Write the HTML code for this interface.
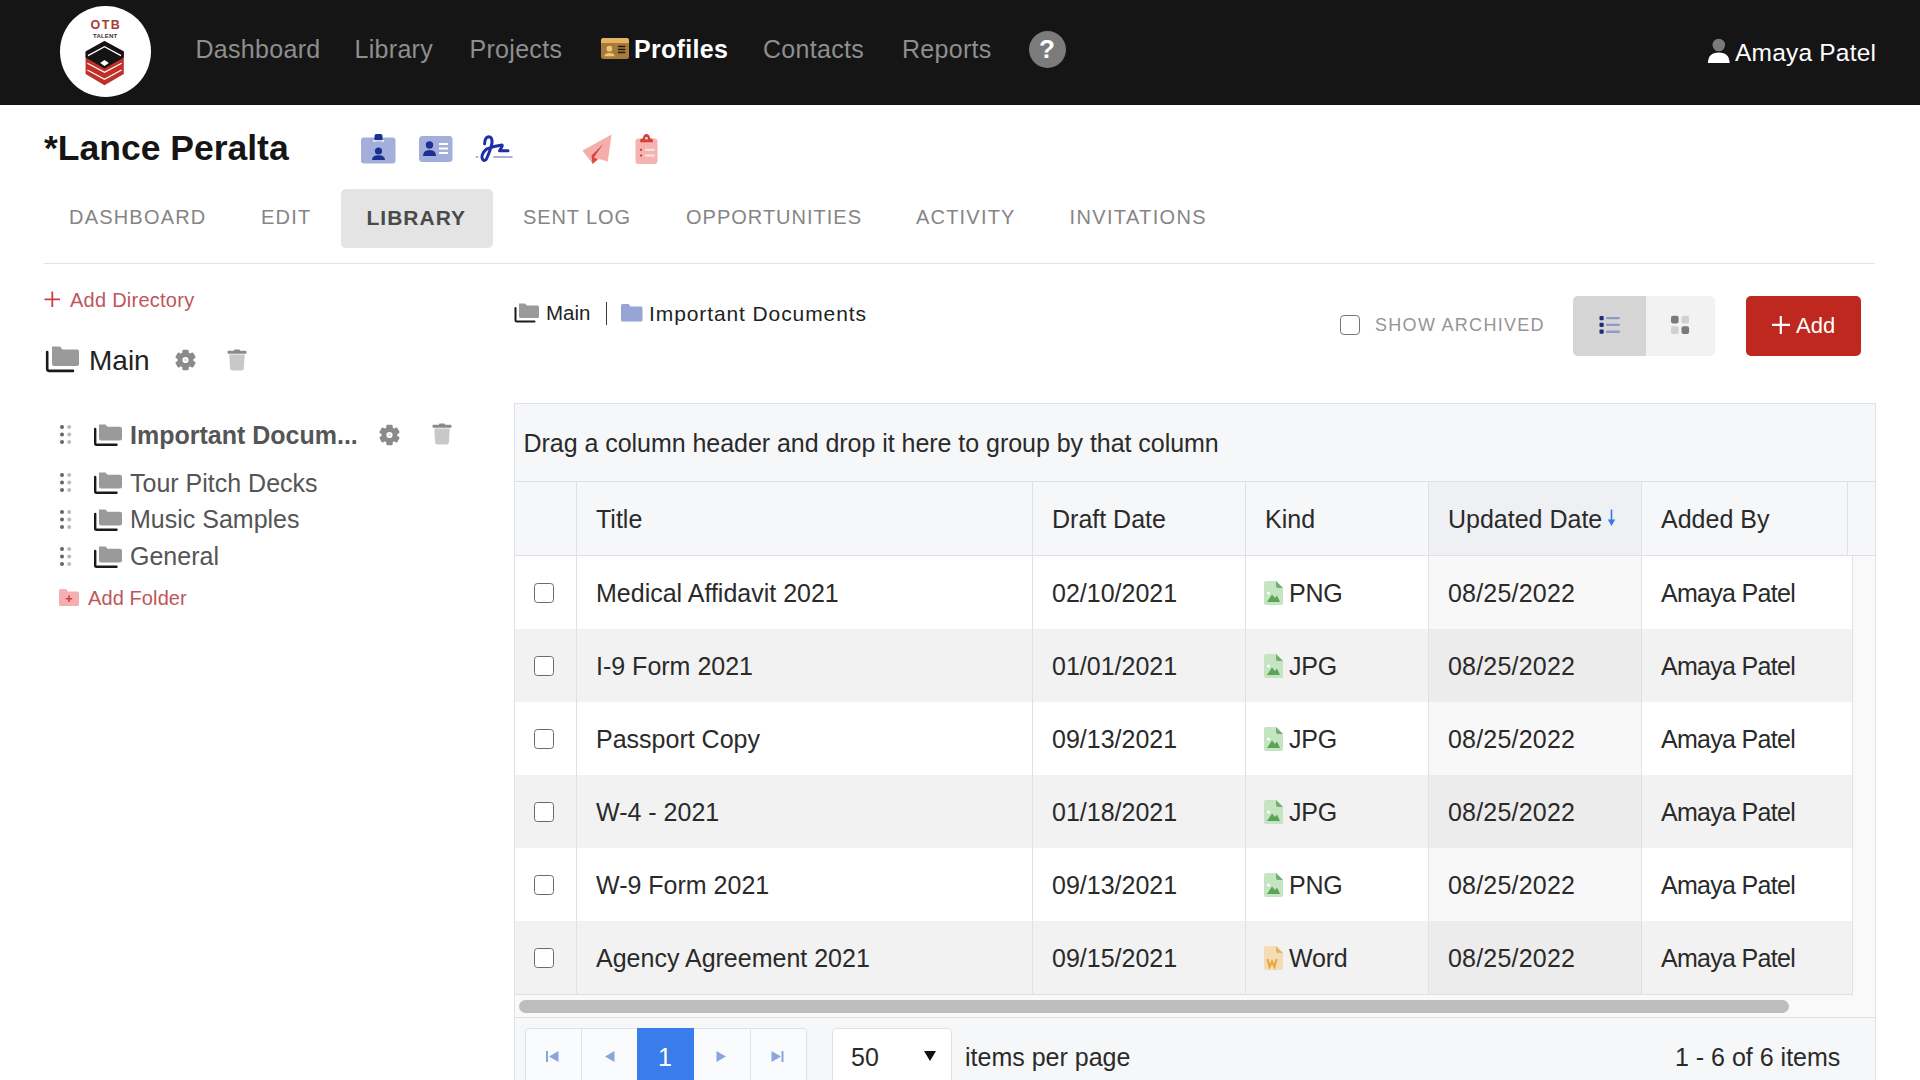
<!DOCTYPE html>
<html><head><meta charset="utf-8">
<style>
*{box-sizing:border-box;margin:0;padding:0}
html,body{width:1920px;height:1080px;overflow:hidden;background:#fff;font-family:"Liberation Sans",sans-serif;color:#222}
.a{position:absolute;white-space:nowrap;line-height:1}
svg{position:absolute;overflow:visible}
#top{position:absolute;left:0;top:0;width:1920px;height:105px;background:#151515}
.nav{color:#8e8e8e;font-size:25px;letter-spacing:0.3px}
.tab{color:#858585;font-size:20px;letter-spacing:1.2px}
.side{color:#555;font-size:25px}
.g{font-size:25px;color:#2a2a2a}
.hdr{position:absolute;background:#f6f7f9}
.vl{position:absolute;width:1px;background:#dfe1e5}
.hl{position:absolute;height:1px;background:#dfe1e5}
.row{position:absolute;left:515px;width:1337px;height:73px}
.cb{position:absolute;left:534px;width:19.5px;height:19.5px;border:1.8px solid #6a6a6a;border-radius:3.5px;background:#fff}

</style></head><body>
<!-- TOP BAR -->
<div id="top"></div>
<div style="position:absolute;left:59.8px;top:5.8px;width:91px;height:91px;border-radius:50%;background:#fff"></div>
<div class="a" style="left:90.5px;top:19px;font-size:12.5px;font-weight:700;letter-spacing:1.5px;color:#a83a38">OTB</div>
<div class="a" style="left:93px;top:33px;font-size:6px;font-weight:700;letter-spacing:0.2px;color:#333">TALENT</div>
<svg style="left:85px;top:41px" width="39" height="45" viewBox="0 0 39 45">
 <polygon points="19.5,0 38.8,10.6 38.8,33 19.5,44.2 0.6,33 0.6,10.6" fill="#c0302a"/>
 <polygon points="19.5,0 38.8,10.6 38.8,16.5 19.5,27.5 0.6,16.5 0.6,10.6" fill="#141414"/>
 <path d="M3 14.6L19.5 5.6L36 14.6" fill="none" stroke="#fff" stroke-width="1.2"/>
 <path d="M15.2 22.1L19.5 19.1L23.8 22.1L19.5 25.1Z" fill="#fff"/>
 <path d="M2.4 22.2L19.5 31.4L36.6 22.2" fill="none" stroke="#fff" stroke-width="1.2"/>
 <path d="M2.4 29L19.5 38.2L36.6 29" fill="none" stroke="#fff" stroke-width="1.2"/>
</svg>
<div class="a nav" style="left:195.5px;top:37px">Dashboard</div>
<div class="a nav" style="left:354.5px;top:37px">Library</div>
<div class="a nav" style="left:469.5px;top:37px">Projects</div>
<svg style="left:601px;top:38px" width="28" height="21" viewBox="0 0 28 21">
 <rect x="0" y="0" width="28" height="21" rx="2.5" fill="#a57c3e"/>
 <path d="M0 5V2.5Q0 0 2.5 0H25.5Q28 0 28 2.5V5Z" fill="#e9b263"/>
 <circle cx="8.4" cy="10.7" r="2.9" fill="#f2c66f"/>
 <path d="M3.3 18.2Q3.8 15 8.5 15Q13.2 15 13.7 18.2Z" fill="#f2c66f"/>
 <rect x="16.9" y="7.7" width="7.4" height="1.5" fill="#2a1a08"/>
 <rect x="16.9" y="10.7" width="7.4" height="1.5" fill="#2a1a08"/>
 <rect x="16.9" y="13.7" width="7.4" height="1.5" fill="#2a1a08"/>
</svg>
<div class="a" style="left:634px;top:37px;font-size:25px;letter-spacing:0.3px;font-weight:700;color:#fff">Profiles</div>
<div class="a nav" style="left:763px;top:37px">Contacts</div>
<div class="a nav" style="left:902px;top:37px">Reports</div>
<div style="position:absolute;left:1029px;top:31px;width:37px;height:37px;border-radius:50%;background:#7b7b7b"></div>
<div class="a" style="left:1036px;top:36px;width:22px;text-align:center;font-size:26px;font-weight:700;color:#fff">?</div>
<svg style="left:1708px;top:38px" width="22" height="26" viewBox="0 0 22 26">
 <circle cx="10.8" cy="7" r="6.3" fill="#7a7a7a"/>
 <path d="M0 25Q0 14.5 10.8 14.5Q21.5 14.5 21.5 25Z" fill="#fff"/>
</svg>
<div class="a" style="left:1735px;top:40.5px;font-size:24.5px;letter-spacing:0.2px;color:#fff">Amaya Patel</div>

<!-- TITLE -->
<div class="a" style="left:44px;top:131px;font-size:35.5px;font-weight:700;color:#151515">*Lance Peralta</div>
<svg style="left:361px;top:134px" width="35" height="30" viewBox="0 0 35 30">
 <rect x="0" y="3.5" width="34.5" height="26" rx="3" fill="#a3aedb"/>
 <rect x="13.5" y="0" width="8" height="7.5" rx="2" fill="#1b3192"/>
 <rect x="12" y="6.2" width="11" height="1.4" fill="#fff"/>
 <circle cx="17.5" cy="17" r="3.6" fill="#1b3192"/>
 <path d="M11 26Q11 21.2 17.5 21.2Q24 21.2 24 26Z" fill="#1b3192"/>
</svg>
<svg style="left:419px;top:136px" width="34" height="27" viewBox="0 0 34 27">
 <rect x="0" y="0" width="33.5" height="26" rx="3.5" fill="#a3aedb"/>
 <circle cx="10.5" cy="9" r="3.7" fill="#1b3192"/>
 <path d="M4 20Q4 14 10.5 14Q17 14 17 20Z" fill="#1b3192"/>
 <rect x="20" y="7" width="9" height="2" fill="#fff"/>
 <rect x="20" y="11.5" width="9" height="2" fill="#fff"/>
 <rect x="20" y="16" width="9" height="2" fill="#fff"/>
</svg>
<svg style="left:475px;top:135px" width="40" height="28" viewBox="0 0 40 28">
 <path d="M9.6 8.8Q10 2 13.5 1.8Q17.5 1.8 17 8Q16 14 11.2 24.5Q8.5 27 7 23Q6.5 18 12 13.8Q19 11 27 10Q28 10.5 24.5 15.8H33" fill="none" stroke="#1b2fa6" stroke-width="3" stroke-linecap="round" stroke-linejoin="round"/>
 <path d="M0.8 22H3.2M18.3 22H37.5" stroke="#8e98c8" stroke-width="1.6"/>
</svg>
<svg style="left:581px;top:133px" width="32" height="32" viewBox="0 0 32 32">
 <path d="M1.5 17.5L30.6 1.4L26.8 28.6L18 26L11.8 31Z" fill="#f4aeab"/>
 <path d="M22.5 10.8L10.5 22.5L11.5 31L16.5 26.3L12.8 24.5Z" fill="#d8453d"/>
</svg>
<svg style="left:634px;top:133px" width="25" height="32" viewBox="0 0 25 32">
 <rect x="1.5" y="5.5" width="22" height="25.5" rx="3" fill="#f4b3b0"/>
 <path d="M6.2 9.3V7.2Q6.2 5.6 8 5.6H8.8Q9.3 0.9 12.5 0.9Q15.7 0.9 16.2 5.6H17Q18.8 5.6 18.8 7.2V9.3Z" fill="#d8403b"/>
 <circle cx="12.5" cy="5.2" r="1.3" fill="#fde3d8"/>
 <circle cx="7" cy="16.8" r="1.1" fill="#c23a35"/>
 <circle cx="7" cy="22.5" r="1.1" fill="#c23a35"/>
 <rect x="11" y="15.8" width="9.5" height="2" fill="#fce4e2"/>
 <rect x="11" y="21.5" width="9.5" height="2" fill="#fce4e2"/>
</svg>

<!-- TABS -->
<div style="position:absolute;left:341px;top:188.5px;width:152px;height:59px;background:#e4e4e4;border-radius:5px"></div>
<div class="a tab" style="left:69px;top:207px">DASHBOARD</div>
<div class="a tab" style="left:261px;top:207px">EDIT</div>
<div class="a tab" style="left:366.5px;top:206.5px;font-size:21px;font-weight:700;letter-spacing:1px;color:#4a4a4a">LIBRARY</div>
<div class="a tab" style="left:523px;top:207px;letter-spacing:0.9px">SENT LOG</div>
<div class="a tab" style="left:686px;top:207px;letter-spacing:1px">OPPORTUNITIES</div>
<div class="a tab" style="left:916px;top:207px">ACTIVITY</div>
<div class="a tab" style="left:1069.5px;top:207px;letter-spacing:1.35px">INVITATIONS</div>
<div style="position:absolute;left:44px;top:262.8px;width:1831px;height:1.6px;background:#e4e4e4"></div>

<!-- SIDEBAR -->
<svg style="left:44px;top:291px" width="17" height="17"><path d="M8.3 0.5V16M0.5 8.3H16" stroke="#c9403f" stroke-width="1.8"/></svg>
<div class="a" style="left:70px;top:290px;font-size:20px;letter-spacing:0.25px;color:#c0555b">Add Directory</div>
<svg style="left:45px;top:346px" width="36" height="27" viewBox="0 0 36 27">
 <path d="M7 0.5H15L17.5 3.5H32Q34 3.5 34 5.5V18Q34 20 32 20H9Q7 20 7 18Z" fill="#9a9a9a"/>
 <path d="M2.2 6V22.8Q2.2 24.9 4.3 24.9H28" fill="none" stroke="#1a1a1a" stroke-width="2.6" stroke-linecap="round"/>
</svg>
<div class="a" style="left:89px;top:347px;font-size:28px;color:#222">Main</div>
<svg style="left:175px;top:349px" width="21" height="22" viewBox="-10.5 -11 21 22"><g fill="#8a8a8a"><circle r="7.9"/><rect x="-3.2" y="-10.3" width="6.4" height="20.6" rx="1.4"/><rect x="-3.2" y="-10.3" width="6.4" height="20.6" rx="1.4" transform="rotate(60)"/><rect x="-3.2" y="-10.3" width="6.4" height="20.6" rx="1.4" transform="rotate(120)"/></g><circle r="3.1" fill="#fff"/><circle r="1.4" fill="#ddd"/></svg>
<svg style="left:227px;top:349px" width="20" height="22" viewBox="0 0 20 22">
 <rect x="7" y="0.6" width="6" height="2.4" rx="1" fill="#8a8a8a"/>
 <rect x="0.5" y="1.8" width="19" height="3" rx="1" fill="#8a8a8a"/>
 <path d="M2.3 5.5H17.7L16.9 19.5Q16.7 21.5 14.7 21.5H5.3Q3.3 21.5 3.1 19.5Z" fill="#c8c8c8"/>
</svg>
<!-- tree rows -->
<svg style="left:59px;top:424px" width="13" height="20"><g fill="#666"><circle cx="3" cy="3" r="2"/><circle cx="3" cy="10.5" r="2"/><circle cx="3" cy="18" r="2"/></g><g fill="#bbb"><circle cx="10.2" cy="3" r="2"/><circle cx="10.2" cy="10.5" r="2"/><circle cx="10.2" cy="18" r="2"/></g></svg>
<svg style="left:93px;top:424px" width="30" height="22" viewBox="0 0 30 22"><path d="M6 0.5H12.5L14.5 2.8H27Q29 2.8 29 4.8V14.5Q29 16.5 27 16.5H8Q6 16.5 6 14.5Z" fill="#9a9a9a"/><path d="M2.2 5V19.5Q2.2 20.8 3.5 20.8H23.5" fill="none" stroke="#1a1a1a" stroke-width="2.4" stroke-linecap="round"/></svg>
<svg style="left:379px;top:424px" width="21" height="22" viewBox="-10.5 -11 21 22"><g fill="#8a8a8a"><circle r="7.9"/><rect x="-3.2" y="-10.3" width="6.4" height="20.6" rx="1.4"/><rect x="-3.2" y="-10.3" width="6.4" height="20.6" rx="1.4" transform="rotate(60)"/><rect x="-3.2" y="-10.3" width="6.4" height="20.6" rx="1.4" transform="rotate(120)"/></g><circle r="3.1" fill="#fff"/><circle r="1.4" fill="#ddd"/></svg>
<svg style="left:432px;top:423px" width="20" height="22" viewBox="0 0 20 22"><rect x="7" y="0.6" width="6" height="2.4" rx="1" fill="#8a8a8a"/><rect x="0.5" y="1.8" width="19" height="3" rx="1" fill="#8a8a8a"/><path d="M2.3 5.5H17.7L16.9 19.5Q16.7 21.5 14.7 21.5H5.3Q3.3 21.5 3.1 19.5Z" fill="#c8c8c8"/></svg>
<svg style="left:59px;top:472px" width="13" height="20"><g fill="#666"><circle cx="3" cy="3" r="2"/><circle cx="3" cy="10.5" r="2"/><circle cx="3" cy="18" r="2"/></g><g fill="#bbb"><circle cx="10.2" cy="3" r="2"/><circle cx="10.2" cy="10.5" r="2"/><circle cx="10.2" cy="18" r="2"/></g></svg>
<svg style="left:93px;top:472px" width="30" height="22" viewBox="0 0 30 22"><path d="M6 0.5H12.5L14.5 2.8H27Q29 2.8 29 4.8V14.5Q29 16.5 27 16.5H8Q6 16.5 6 14.5Z" fill="#9a9a9a"/><path d="M2.2 5V19.5Q2.2 20.8 3.5 20.8H23.5" fill="none" stroke="#1a1a1a" stroke-width="2.4" stroke-linecap="round"/></svg>
<svg style="left:59px;top:508.5px" width="13" height="20"><g fill="#666"><circle cx="3" cy="3" r="2"/><circle cx="3" cy="10.5" r="2"/><circle cx="3" cy="18" r="2"/></g><g fill="#bbb"><circle cx="10.2" cy="3" r="2"/><circle cx="10.2" cy="10.5" r="2"/><circle cx="10.2" cy="18" r="2"/></g></svg>
<svg style="left:93px;top:508.5px" width="30" height="22" viewBox="0 0 30 22"><path d="M6 0.5H12.5L14.5 2.8H27Q29 2.8 29 4.8V14.5Q29 16.5 27 16.5H8Q6 16.5 6 14.5Z" fill="#9a9a9a"/><path d="M2.2 5V19.5Q2.2 20.8 3.5 20.8H23.5" fill="none" stroke="#1a1a1a" stroke-width="2.4" stroke-linecap="round"/></svg>
<svg style="left:59px;top:545.5px" width="13" height="20"><g fill="#666"><circle cx="3" cy="3" r="2"/><circle cx="3" cy="10.5" r="2"/><circle cx="3" cy="18" r="2"/></g><g fill="#bbb"><circle cx="10.2" cy="3" r="2"/><circle cx="10.2" cy="10.5" r="2"/><circle cx="10.2" cy="18" r="2"/></g></svg>
<svg style="left:93px;top:545.5px" width="30" height="22" viewBox="0 0 30 22"><path d="M6 0.5H12.5L14.5 2.8H27Q29 2.8 29 4.8V14.5Q29 16.5 27 16.5H8Q6 16.5 6 14.5Z" fill="#9a9a9a"/><path d="M2.2 5V19.5Q2.2 20.8 3.5 20.8H23.5" fill="none" stroke="#1a1a1a" stroke-width="2.4" stroke-linecap="round"/></svg>
<div class="a side" style="left:130px;top:422.5px;font-weight:700">Important Docum...</div>
<div class="a side" style="left:130px;top:471px">Tour Pitch Decks</div>
<div class="a side" style="left:130px;top:507px">Music Samples</div>
<div class="a side" style="left:130px;top:544px">General</div>
<svg style="left:59px;top:589px" width="20" height="17" viewBox="0 0 20 17">
 <path d="M0 1.5Q0 0 1.5 0H7L9 2.5H18.5Q20 2.5 20 4V15.5Q20 17 18.5 17H1.5Q0 17 0 15.5Z" fill="#f4b0b0"/>
 <path d="M10 6.5V13M6.8 9.8H13.2" stroke="#d0403f" stroke-width="1.6"/>
</svg>
<div class="a" style="left:88px;top:588px;font-size:20px;letter-spacing:0.1px;color:#c0555b">Add Folder</div>

<!-- BREADCRUMB / TOOLBAR -->
<svg style="left:514px;top:303px" width="26" height="20" viewBox="0 0 26 20">
 <path d="M5 0.5H11L13 2.5H23.5Q25 2.5 25 4V13.5Q25 15 23.5 15H6.5Q5 15 5 13.5Z" fill="#9a9a9a"/>
 <path d="M1.5 5V17.2Q1.5 18.5 2.8 18.5H20.5" fill="none" stroke="#1a1a1a" stroke-width="2" stroke-linecap="round"/>
</svg>
<div class="a" style="left:546px;top:303px;font-size:20.5px;color:#222">Main</div>
<div style="position:absolute;left:605.8px;top:301.6px;width:1.6px;height:23.4px;background:#3a3a3a"></div>
<svg style="left:621px;top:304px" width="22" height="18" viewBox="0 0 22 18">
 <path d="M0 1.5Q0 0 1.5 0H7.5L9.5 2.5H20Q21.5 2.5 21.5 4V16Q21.5 17.5 20 17.5H1.5Q0 17.5 0 16Z" fill="#98a4d8"/>
</svg>
<div class="a" style="left:649px;top:303px;font-size:21px;letter-spacing:0.9px;color:#222">Important Documents</div>
<div style="position:absolute;left:1340px;top:315px;width:20px;height:20px;border:1.6px solid #777;border-radius:4px"></div>
<div class="a" style="left:1375px;top:315.5px;font-size:18px;letter-spacing:1.3px;color:#959595">SHOW ARCHIVED</div>
<div style="position:absolute;left:1573px;top:296px;width:142px;height:60px;border-radius:5px;background:#f2f2f2;overflow:hidden"><div style="width:73px;height:60px;background:#d5d5d5"></div></div>
<svg style="left:1599px;top:315px" width="23" height="19">
 <rect x="0.5" y="1" width="4.2" height="4.2" rx="1" fill="#1b2f7a"/>
 <rect x="0.5" y="7.8" width="4.2" height="4.2" rx="1" fill="#1b2f7a"/>
 <rect x="0.5" y="14.6" width="4.2" height="4.2" rx="1" fill="#1b2f7a"/>
 <rect x="7" y="2" width="14" height="2.3" rx="1" fill="#8d9cc2"/>
 <rect x="7" y="8.8" width="14" height="2.3" rx="1" fill="#8d9cc2"/>
 <rect x="7" y="15.6" width="14" height="2.3" rx="1" fill="#8d9cc2"/>
</svg>
<svg style="left:1671px;top:315px" width="19" height="20">
 <rect x="0" y="0.8" width="7.6" height="7.6" rx="2" fill="#7a7a7a"/>
 <rect x="10.5" y="0.8" width="7.6" height="7.6" rx="2" fill="#d0d0d0"/>
 <rect x="0" y="11.3" width="7.6" height="7.6" rx="2" fill="#d0d0d0"/>
 <rect x="10.5" y="11.3" width="7.6" height="7.6" rx="2" fill="#7a7a7a"/>
</svg>
<div style="position:absolute;left:1746px;top:296px;width:115px;height:60px;border-radius:5px;background:#bf281f"></div>
<svg style="left:1772px;top:316px" width="18" height="18"><path d="M8.8 0V18M0 8.8H18" stroke="#fff" stroke-width="2.2"/></svg>
<div class="a" style="left:1796px;top:315px;font-size:22px;color:#fff">Add</div>

<!-- GRID -->
<div style="position:absolute;left:514px;top:403px;width:1362px;height:700px;border:1px solid #dfe1e5;background:#fff"></div>
<div class="hdr" style="left:515px;top:404px;width:1360px;height:78px"></div>
<div class="hl" style="left:515px;top:481px;width:1360px"></div>
<div class="hdr" style="left:515px;top:482px;width:1360px;height:73px"></div>
<div style="position:absolute;left:1429px;top:482px;width:212px;height:73px;background:#eff0f3"></div>
<div class="hl" style="left:515px;top:555px;width:1360px"></div>
<div class="a g" style="left:523.5px;top:431px;letter-spacing:-0.04px">Drag a column header and drop it here to group by that column</div>
<div class="vl" style="left:576px;top:481px;height:75px"></div>
<div class="vl" style="left:1032px;top:481px;height:75px"></div>
<div class="vl" style="left:1245px;top:481px;height:75px"></div>
<div class="vl" style="left:1428px;top:481px;height:75px"></div>
<div class="vl" style="left:1641px;top:481px;height:75px"></div>
<div class="vl" style="left:1847px;top:481px;height:75px"></div>
<div class="a g" style="left:596px;top:507px">Title</div>
<div class="a g" style="left:1052px;top:507px">Draft Date</div>
<div class="a g" style="left:1265px;top:507px">Kind</div>
<div class="a g" style="left:1448px;top:507px">Updated Date</div>
<div class="a g" style="left:1661px;top:507px">Added By</div>
<svg style="left:1606px;top:509px" width="11" height="18" viewBox="0 0 11 18"><path d="M5.5 0.5V12" stroke="#3b78e7" stroke-width="1.6"/><path d="M1.8 10.5H9.2L5.5 17Z" fill="#3b78e7"/></svg>
<div style="position:absolute;left:515px;top:556px;width:1360px;height:461px;background:#f9f9f9"></div>
<div class="row" style="top:556px;background:#fff"></div>
<div style="position:absolute;left:1429px;top:556px;width:212px;height:73px;background:#f8f8f8"></div>
<div class="cb" style="top:583px"></div>
<div class="a g" style="left:596px;top:581px;letter-spacing:0px">Medical Affidavit 2021</div>
<div class="a g" style="left:1052px;top:581px;letter-spacing:0px">02/10/2021</div>
<div class="a g" style="left:1289px;top:581px;letter-spacing:-0.2px">PNG</div>
<div class="a g" style="left:1448px;top:581px;letter-spacing:0.2px">08/25/2022</div>
<div class="a g" style="left:1661px;top:581px;letter-spacing:-0.7px">Amaya Patel</div>
<svg style="left:1264px;top:581px" width="19" height="24" viewBox="0 0 19 24"><path d="M2 0H12L19 7V22Q19 24 17 24H2Q0 24 0 22V2Q0 0 2 0Z" fill="#c5e4c1"/><path d="M12 0L19 7H14Q12 7 12 5Z" fill="#6fae6c"/><circle cx="4.5" cy="12" r="1.6" fill="#fff"/><path d="M3 21L8 13.5L11 17L13 14.5L16 21Z" fill="#5ba457"/></svg>
<div class="row" style="top:629px;background:#f2f2f2"></div>
<div style="position:absolute;left:1429px;top:629px;width:212px;height:73px;background:#ececec"></div>
<div class="cb" style="top:656px"></div>
<div class="a g" style="left:596px;top:654px;letter-spacing:0px">I-9 Form 2021</div>
<div class="a g" style="left:1052px;top:654px;letter-spacing:0px">01/01/2021</div>
<div class="a g" style="left:1289px;top:654px;letter-spacing:-0.2px">JPG</div>
<div class="a g" style="left:1448px;top:654px;letter-spacing:0.2px">08/25/2022</div>
<div class="a g" style="left:1661px;top:654px;letter-spacing:-0.7px">Amaya Patel</div>
<svg style="left:1264px;top:654px" width="19" height="24" viewBox="0 0 19 24"><path d="M2 0H12L19 7V22Q19 24 17 24H2Q0 24 0 22V2Q0 0 2 0Z" fill="#c5e4c1"/><path d="M12 0L19 7H14Q12 7 12 5Z" fill="#6fae6c"/><circle cx="4.5" cy="12" r="1.6" fill="#fff"/><path d="M3 21L8 13.5L11 17L13 14.5L16 21Z" fill="#5ba457"/></svg>
<div class="row" style="top:702px;background:#fff"></div>
<div style="position:absolute;left:1429px;top:702px;width:212px;height:73px;background:#f8f8f8"></div>
<div class="cb" style="top:729px"></div>
<div class="a g" style="left:596px;top:727px;letter-spacing:0px">Passport Copy</div>
<div class="a g" style="left:1052px;top:727px;letter-spacing:0px">09/13/2021</div>
<div class="a g" style="left:1289px;top:727px;letter-spacing:-0.2px">JPG</div>
<div class="a g" style="left:1448px;top:727px;letter-spacing:0.2px">08/25/2022</div>
<div class="a g" style="left:1661px;top:727px;letter-spacing:-0.7px">Amaya Patel</div>
<svg style="left:1264px;top:727px" width="19" height="24" viewBox="0 0 19 24"><path d="M2 0H12L19 7V22Q19 24 17 24H2Q0 24 0 22V2Q0 0 2 0Z" fill="#c5e4c1"/><path d="M12 0L19 7H14Q12 7 12 5Z" fill="#6fae6c"/><circle cx="4.5" cy="12" r="1.6" fill="#fff"/><path d="M3 21L8 13.5L11 17L13 14.5L16 21Z" fill="#5ba457"/></svg>
<div class="row" style="top:775px;background:#f2f2f2"></div>
<div style="position:absolute;left:1429px;top:775px;width:212px;height:73px;background:#ececec"></div>
<div class="cb" style="top:802px"></div>
<div class="a g" style="left:596px;top:800px;letter-spacing:0px">W-4 - 2021</div>
<div class="a g" style="left:1052px;top:800px;letter-spacing:0px">01/18/2021</div>
<div class="a g" style="left:1289px;top:800px;letter-spacing:-0.2px">JPG</div>
<div class="a g" style="left:1448px;top:800px;letter-spacing:0.2px">08/25/2022</div>
<div class="a g" style="left:1661px;top:800px;letter-spacing:-0.7px">Amaya Patel</div>
<svg style="left:1264px;top:800px" width="19" height="24" viewBox="0 0 19 24"><path d="M2 0H12L19 7V22Q19 24 17 24H2Q0 24 0 22V2Q0 0 2 0Z" fill="#c5e4c1"/><path d="M12 0L19 7H14Q12 7 12 5Z" fill="#6fae6c"/><circle cx="4.5" cy="12" r="1.6" fill="#fff"/><path d="M3 21L8 13.5L11 17L13 14.5L16 21Z" fill="#5ba457"/></svg>
<div class="row" style="top:848px;background:#fff"></div>
<div style="position:absolute;left:1429px;top:848px;width:212px;height:73px;background:#f8f8f8"></div>
<div class="cb" style="top:875px"></div>
<div class="a g" style="left:596px;top:873px;letter-spacing:0px">W-9 Form 2021</div>
<div class="a g" style="left:1052px;top:873px;letter-spacing:0px">09/13/2021</div>
<div class="a g" style="left:1289px;top:873px;letter-spacing:-0.2px">PNG</div>
<div class="a g" style="left:1448px;top:873px;letter-spacing:0.2px">08/25/2022</div>
<div class="a g" style="left:1661px;top:873px;letter-spacing:-0.7px">Amaya Patel</div>
<svg style="left:1264px;top:873px" width="19" height="24" viewBox="0 0 19 24"><path d="M2 0H12L19 7V22Q19 24 17 24H2Q0 24 0 22V2Q0 0 2 0Z" fill="#c5e4c1"/><path d="M12 0L19 7H14Q12 7 12 5Z" fill="#6fae6c"/><circle cx="4.5" cy="12" r="1.6" fill="#fff"/><path d="M3 21L8 13.5L11 17L13 14.5L16 21Z" fill="#5ba457"/></svg>
<div class="row" style="top:921px;background:#f2f2f2"></div>
<div style="position:absolute;left:1429px;top:921px;width:212px;height:73px;background:#ececec"></div>
<div class="cb" style="top:948px"></div>
<div class="a g" style="left:596px;top:946px;letter-spacing:0px">Agency Agreement 2021</div>
<div class="a g" style="left:1052px;top:946px;letter-spacing:0px">09/15/2021</div>
<div class="a g" style="left:1289px;top:946px;letter-spacing:-0.2px">Word</div>
<div class="a g" style="left:1448px;top:946px;letter-spacing:0.2px">08/25/2022</div>
<div class="a g" style="left:1661px;top:946px;letter-spacing:-0.7px">Amaya Patel</div>
<svg style="left:1264px;top:946px" width="19" height="24" viewBox="0 0 19 24"><path d="M2 0H12L19 7V22Q19 24 17 24H2Q0 24 0 22V2Q0 0 2 0Z" fill="#f6dcb4"/><path d="M12 0L19 7H14Q12 7 12 5Z" fill="#e3b566"/><path d="M3.5 13L5.5 21L8 15.5L10.5 21L12.5 13" fill="none" stroke="#e9a63c" stroke-width="2"/></svg>
<div class="vl" style="left:576px;top:556px;height:438px"></div>
<div class="vl" style="left:1032px;top:556px;height:438px"></div>
<div class="vl" style="left:1245px;top:556px;height:438px"></div>
<div class="vl" style="left:1428px;top:556px;height:438px"></div>
<div class="vl" style="left:1641px;top:556px;height:438px"></div>
<div class="vl" style="left:1852px;top:556px;height:438px"></div>
<div class="hl" style="left:515px;top:994px;width:1338px"></div>
<div style="position:absolute;left:519px;top:1000px;width:1270px;height:13px;border-radius:7px;background:#bdbdbd"></div>
<div class="hdr" style="left:515px;top:1017px;width:1360px;height:63px;border-top:1px solid #dfe1e5"></div>
<div style="position:absolute;left:525px;top:1028px;width:282px;height:60px;border:1px solid #dfe1e5;border-radius:4px;background:#fafbfc"></div>
<div class="vl" style="left:581px;top:1029px;height:51px"></div>
<div class="vl" style="left:750px;top:1029px;height:51px"></div>
<div style="position:absolute;left:637px;top:1028px;width:57px;height:52px;background:#3a7ce9"></div>
<div class="a" style="left:658px;top:1045px;font-size:25px;color:#fff">1</div>
<svg style="left:546px;top:1051px" width="13" height="11"><rect x="0" y="0" width="2" height="11" fill="#89a6dc"/><path d="M12.5 0V11L3 5.5Z" fill="#89a6dc"/></svg>
<svg style="left:605px;top:1051px" width="10" height="11"><path d="M9.5 0V11L0 5.5Z" fill="#89a6dc"/></svg>
<svg style="left:716px;top:1051px" width="10" height="11"><path d="M0.5 0V11L10 5.5Z" fill="#89a6dc"/></svg>
<svg style="left:771px;top:1051px" width="13" height="11"><path d="M0.5 0V11L10 5.5Z" fill="#89a6dc"/><rect x="10.5" y="0" width="2" height="11" fill="#89a6dc"/></svg>
<div style="position:absolute;left:832px;top:1028px;width:120px;height:60px;border:1px solid #dfe1e5;border-radius:4px;background:#fff"></div>
<div class="a g" style="left:851px;top:1045px">50</div>
<svg style="left:924px;top:1051px" width="12" height="10"><path d="M0 0H12L6 10Z" fill="#111"/></svg>
<div class="a g" style="left:965px;top:1045px">items per page</div>
<div class="a g" style="left:1675px;top:1045px">1 - 6 of 6 items</div>

</body></html>
